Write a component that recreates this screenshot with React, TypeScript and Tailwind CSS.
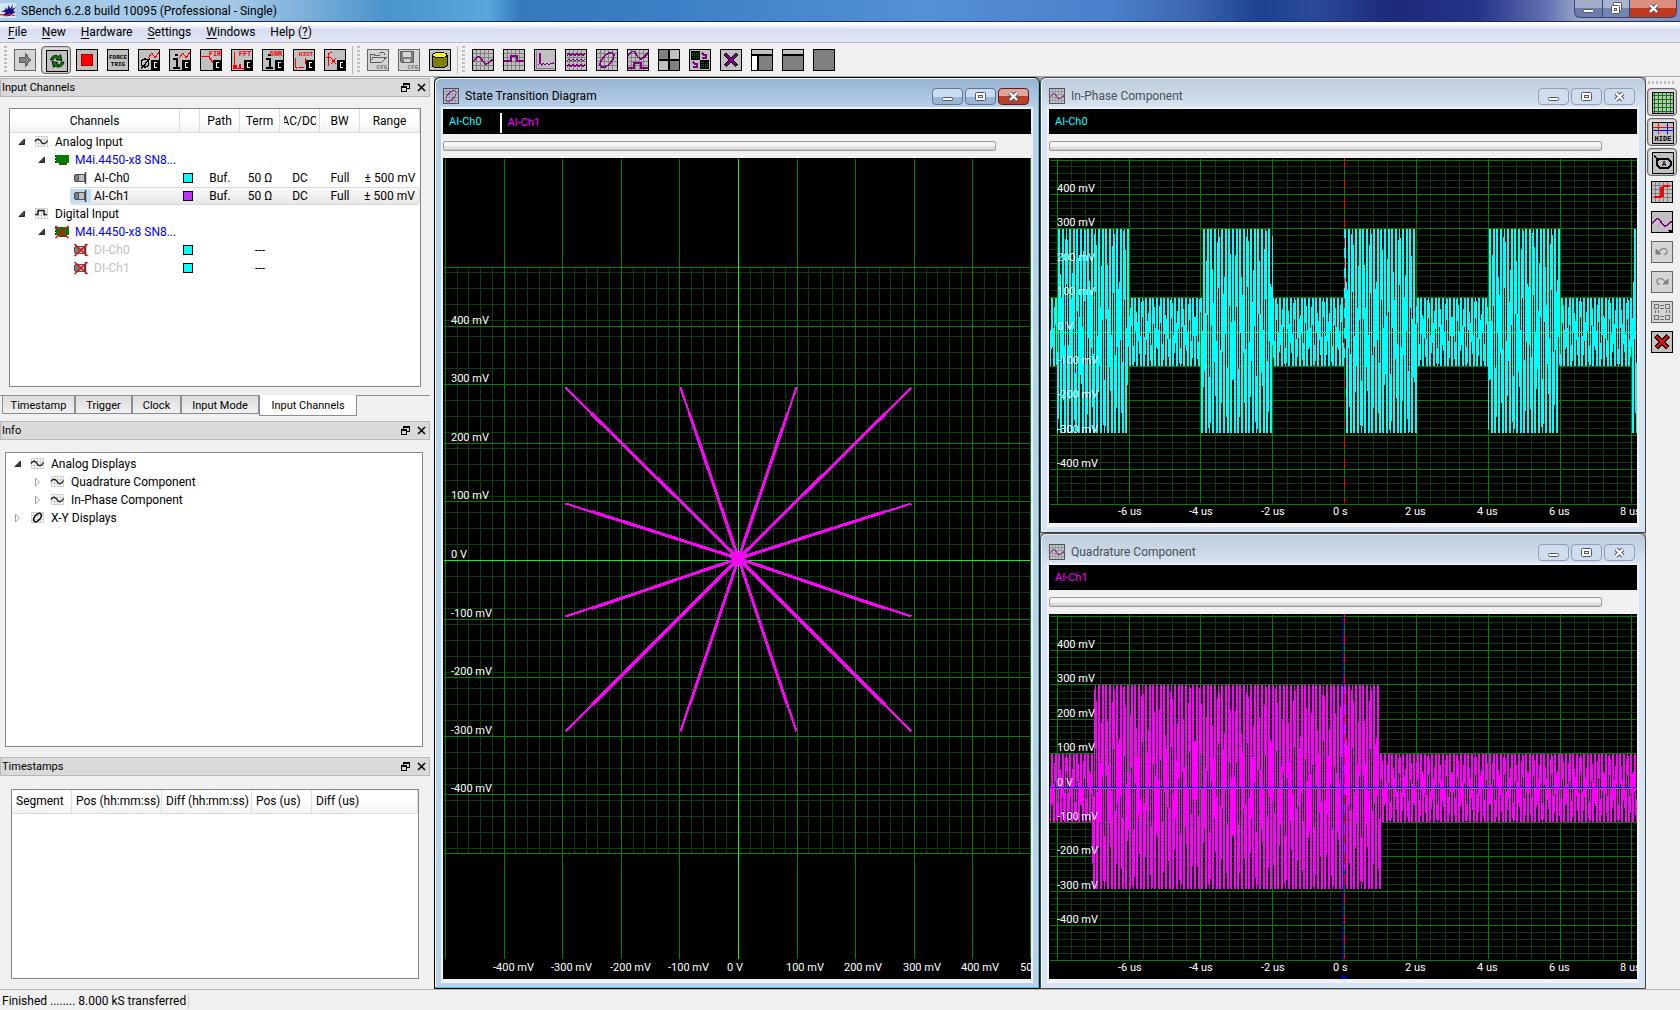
import { useLayoutEffect, useRef, useState } from 'react';
import type { ReactNode } from 'react';
import { clsx } from 'clsx';

/* ---------- icons ---------- */

function Icon({ children, off }: { children?: ReactNode; off?: boolean }) {
  return (
    <svg width="22" height="22" viewBox="0 0 22 22" shapeRendering="crispEdges" fill="none" aria-hidden="true" className="shrink-0">
      <rect x="0.5" y="0.5" width="21" height="21" fill={off ? '#d4d4d4' : '#c0c0c0'} stroke={off ? '#666' : '#000'} />
      {children}
    </svg>
  );
}

const Grid = ({ color = '#808080' }: { color?: string }) => (
  <path d="M4.5 1v20M8.5 1v20M12.5 1v20M16.5 1v20M1 4.5h20M1 8.5h20M1 12.5h20M1 16.5h20" stroke={color} />
);

const Tag = ({ x, y, color, size = 7, children }: { x: number; y: number; color: string; size?: number; children: string }) => (
  <text x={x} y={y} fill={color} fontSize={size} fontWeight="700" textAnchor="middle" fontFamily="'Liberation Mono', monospace">
    {children}
  </text>
);

/* little "C" box that marks the calculation tools */
const CalcBox = () => (
  <>
    <rect x="13" y="11" width="9" height="11" fill="#000" />
    <path d="M19 13.5h-2.5v5H19" stroke="#fff" strokeWidth="1.4" />
  </>
);

const WAVE = 'M1 12.5C4 11 5 7.5 7 7.5S11 15 14 15S18 11 21 10.5';

const icons = {
  start: (
    <Icon off>
      <path d="M5 8.5h6v-4l6 6.5l-6 6.5v-4H5z" fill="#808080" stroke="#606060" />
    </Icon>
  ),
  loop: (
    <Icon>
      <g stroke="#000" strokeWidth="0.8" fill="#008000" shapeRendering="auto">
        <path d="M4.500 10C5 6 9 4 13 6.500L14.500 4.500L16 10.500L10 9.800L11.500 8.200C9 7 7.500 8 7.500 10z" />
        <path d="M18 12C17.500 16 13 18.500 9 16L7.500 17.500L6 11.500L12 12.500L10.500 14C13 15.500 15 14 15 12z" />
      </g>
    </Icon>
  ),
  stop: (
    <Icon>
      <rect x="5.5" y="5.5" width="11" height="11" fill="#f00" stroke="#900" />
    </Icon>
  ),
  force: (
    <Icon>
      <Tag x={11} y={10} color="#000" size={6}>FORCE</Tag>
      <Tag x={11} y={17} color="#000" size={6}>TRIG</Tag>
    </Icon>
  ),
  average: (
    <Icon>
      <path d="M10 9l4-5l3 5l4-6" stroke="#f00" />
      <ellipse cx="7" cy="14" rx="3.500" ry="4" stroke="#000" strokeWidth="1.500" />
      <path d="M3 20L12 9" stroke="#000" strokeWidth="1.300" />
      <CalcBox />
    </Icon>
  ),
  signalInfo: (
    <Icon>
      <path d="M10 9l4-5l3 5l4-6" stroke="#f00" />
      <path d="M4 10h4v8M4 19h7M6 6h3" stroke="#000" strokeWidth="2" />
      <CalcBox />
    </Icon>
  ),
  fir: (
    <Icon>
      <path d="M1 7.500h8l8 13" stroke="#f00" strokeWidth="1.300" />
      <Tag x={15} y={7} color="#f00">FIR</Tag>
      <CalcBox />
    </Icon>
  ),
  fft: (
    <Icon>
      <path d="M2 20V16h1V3h1v13h2v3h2v-4h2v4h3v1z" fill="#f00" />
      <Tag x={14} y={7} color="#f00">FFT</Tag>
      <CalcBox />
    </Icon>
  ),
  snr: (
    <Icon>
      <path d="M4 10h4v8M4 19h7M6 6h3" stroke="#000" strokeWidth="2" />
      <Tag x={14} y={7} color="#f00">SNR</Tag>
      <CalcBox />
    </Icon>
  ),
  hist: (
    <Icon>
      <path d="M2.500 9v9l2 1.500M5 18.500h6M12.500 9v6" stroke="#f00" strokeWidth="1.500" />
      <Tag x={13} y={7} color="#f00" size={6}>HIST</Tag>
      <CalcBox />
    </Icon>
  ),
  formula: (
    <Icon>
      <path d="M8 3.500H6.500L4.500 5v12M2 8.500h5M7 9l5 6M12 9l-5 6" stroke="#f00" />
      <CalcBox />
    </Icon>
  ),
  openCfg: (
    <Icon off>
      <path d="M3 12V5h4l1 1.500h5M3 12.500l3-4h13l-4 4.500H3zM12 4.500c3-2 5-1 6 1" stroke="#606060" />
      <Tag x={15} y={20} color="#707070" size={6}>CFG</Tag>
    </Icon>
  ),
  saveCfg: (
    <Icon off>
      <path d="M2.500 2.500h13v11h-12l-1-1z" fill="#808080" stroke="#606060" />
      <path d="M5 3h8v5H5zM6 10h6v3H6z" fill="#d4d4d4" />
      <Tag x={15} y={20} color="#707070" size={6}>CFG</Tag>
    </Icon>
  ),
  database: (
    <Icon>
      <path d="M3.500 6v11c2 2.500 12 2.500 14.500 0V6z" fill="#808000" stroke="#000" />
      <ellipse cx="10.700" cy="6" rx="7.200" ry="2.500" fill="#ff0" stroke="#000" />
    </Icon>
  ),
  analog: (
    <Icon>
      <Grid />
      <path d={WAVE} stroke="#800080" strokeWidth="1.500" />
    </Icon>
  ),
  digital: (
    <Icon>
      <Grid />
      <path d="M1 12h7V7h6v5h7" stroke="#800080" strokeWidth="1.600" />
    </Icon>
  ),
  spectrum: (
    <Icon>
      <path d="M2.500 2v17.500H20" stroke="#808080" />
      <path d="M4 16l2-2V4v9l1.500 3l2-1.500l1.500 1.500l2-2l2 2l2-2l1 1l2-1.500" stroke="#800080" strokeWidth="1.300" />
    </Icon>
  ),
  multi: (
    <Icon>
      <Grid />
      <path d="M2 6.500l2-2l2 2l2-2l2 2l2-2l2 2l2-2l2 2l2-2M2 12l2-2l2 2l2-2l2 2l2-2l2 2l2-2l2 2l2-2M2 17.500l2-2l2 2l2-2l2 2l2-2l2 2l2-2l2 2l2-2" stroke="#800080" />
    </Icon>
  ),
  xy: (
    <Icon>
      <Grid />
      <ellipse cx="11" cy="11" rx="9" ry="4.500" transform="rotate(-48 11 11)" stroke="#800080" strokeWidth="1.600" />
    </Icon>
  ),
  mixed: (
    <Icon>
      <Grid />
      <path d="M1 7C4 2 7 1 9 5s5 7 8 3l4-4M1 19h6v-5h7v5h7" stroke="#800080" strokeWidth="1.500" />
    </Icon>
  ),
  tile: (
    <Icon>
      <path d="M1 1h10v10H1zM11 11h10v10H11z" fill="#808080" />
      <path d="M11 0v22M0 11h22" stroke="#000" strokeWidth="2" />
    </Icon>
  ),
  swap: (
    <Icon>
      <path d="M2 2h9v9H2zM11 11h9v9h-9z" fill="#000" />
      <path d="M3 4.500h7M3 6.500h7M3 8.500h7M12 13.500h7M12 15.500h7M12 17.500h7" stroke="#008000" strokeDasharray="1 1" />
      <path d="M13 4l3 3M17 5v4h-4M4 13l3 3M8 14v4H4" stroke="#800080" strokeWidth="1.500" />
    </Icon>
  ),
  closeDisplay: (
    <Icon>
      <path d="M5 5l12 12M17 5L5 17" stroke="#000" strokeWidth="4" />
      <path d="M5.500 5.500l11 11M16.500 5.500l-11 11" stroke="#800080" strokeWidth="2.200" />
    </Icon>
  ),
  layoutSplit: (
    <Icon>
      <path d="M1 7h6v14H1z" fill="#fff" />
      <path d="M8 7h13v14H8z" fill="#808080" />
      <path d="M0 6h22M7 6v16" stroke="#000" strokeWidth="2" />
    </Icon>
  ),
  layoutTop: (
    <Icon>
      <path d="M1 7h20v14H1z" fill="#808080" />
      <path d="M0 6h22" stroke="#000" strokeWidth="2" />
    </Icon>
  ),
  layoutFull: (
    <Icon>
      <path d="M1 1h20v20H1z" fill="#808080" />
    </Icon>
  ),
  grid: (
    <Icon>
      <path d="M2.500 1v20M6.500 1v20M10.500 1v20M14.500 1v20M18.500 1v20M1 3.500h20M1 7.500h20M1 11.500h20M1 15.500h20M1 19.500h20" stroke="#008000" />
    </Icon>
  ),
  hide: (
    <Icon>
      <path d="M1 5.500h20M6.500 1v11" stroke="#f00" />
      <path d="M1 8.500h20M15.500 1v11" stroke="#00f" />
      <Tag x={11} y={19} color="#000" size={7}>HIDE</Tag>
    </Icon>
  ),
  label: (
    <Icon>
      <path d="M2 4l5 4M6 7h10l3 3v3l-3 3H8l-3-3V8z" stroke="#000" strokeWidth="1.600" />
      <Tag x={12} y={14} color="#000" size={7}>A</Tag>
    </Icon>
  ),
  edge: (
    <Icon>
      <Grid />
      <path d="M3 16h6c2 0 2-2 2-5s0-6 2-6h6" stroke="#f00" strokeWidth="2" />
      <path d="M11 16V6" stroke="#f00" strokeWidth="4" />
    </Icon>
  ),
  wave: (
    <Icon>
      <path d={WAVE} stroke="#800080" strokeWidth="1.500" />
      <path d="M17 19h5l-2.500 3z" fill="#000" />
    </Icon>
  ),
  undo: (
    <Icon off>
      <g shapeRendering="auto">
        <path d="M5 8v5h5z" fill="#808080" stroke="#808080" />
        <path d="M8 10.500c2.500-4 8-4 8 0c0 2-1 3-3 3" stroke="#808080" strokeWidth="1.200" />
      </g>
    </Icon>
  ),
  redo: (
    <Icon off>
      <g shapeRendering="auto">
        <path d="M17 8v5h-5z" fill="#808080" stroke="#808080" />
        <path d="M14 10.500c-2.500-4-8-4-8 0c0 2 1 3 3 3" stroke="#808080" strokeWidth="1.200" />
      </g>
    </Icon>
  ),
  channels: (
    <Icon off>
      <path d="M3.500 3.500h4v4h-4zM14.500 3.500h4v4h-4zM3.500 14.500h4v4h-4zM14.500 14.500h4v4h-4zM9 4.500h4M9 7.500h4M9 15.500h4M9 18.500h4M4.500 9v3M7.500 9v3M15.500 9v3M18.500 9v3" stroke="#707070" />
    </Icon>
  ),
  remove: (
    <Icon>
      <path d="M5 5l12 12M17 5L5 17" stroke="#000" strokeWidth="4.500" />
      <path d="M5.500 5.500l11 11M16.500 5.500l-11 11" stroke="#f00" strokeWidth="2.600" />
    </Icon>
  ),
};

type IconName = keyof typeof icons;

function TreeIcon({ kind }: { kind: string }) {
  const crossed = kind.endsWith('-off');
  const base = kind.replace('-off', '');
  return (
    <svg width="16" height="14" viewBox="0 0 16 14" fill="none" aria-hidden="true" className="shrink-0">
      {(base === 'analog' || base === 'digital' || base === 'xy') && (
        <path d="M1.500 1.500h12v10h-12zM4.500 1v11M7.500 1v11M10.500 1v11M1 4.500h13M1 8.500h13" stroke="#d0d0d0" shapeRendering="crispEdges" />
      )}
      {base === 'analog' && <path d="M1 6.500C2.500 4 5 3 7 6.500S11.500 9 13.500 5.500" stroke="#222" strokeWidth="1.500" />}
      {base === 'digital' && <path d="M1 7.500h3v-4h6v4h3" stroke="#222" strokeWidth="1.500" />}
      {base === 'xy' && <ellipse cx="7.500" cy="6.500" rx="5" ry="2.800" transform="rotate(-50 7.500 6.500)" stroke="#111" strokeWidth="1.700" />}
      {base === 'card' && (
        <>
          <path d="M2 2h13v8H2z" fill="#008000" />
          <path d="M5 10h8v2H5z" fill="#604000" />
          <path d="M1.500 2v2M1.500 5v2M1.500 8v2" stroke="#222" />
        </>
      )}
      {base === 'plug' && (
        <>
          <rect x="1.500" y="3.500" width="4" height="7" rx="1.500" fill="#808080" stroke="#444" />
          <rect x="5.500" y="3.500" width="6" height="7" fill="#c0c0c0" stroke="#555" />
          <path d="M12.500 1v12" stroke="#444" strokeWidth="1.500" />
        </>
      )}
      {crossed && <path d="M1.500 1l13 12M14.500 1l-13 12" stroke="#e01010" strokeWidth="1.700" />}
    </svg>
  );
}

function Arrow({ open }: { open: boolean }) {
  return (
    <svg width="8" height="10" viewBox="0 0 8 10" aria-hidden="true" className="shrink-0">
      {open ? <path d="M6.500 2v5.500H1z" fill="#404040" stroke="#262626" /> : <path d="M1.500 1l4 4l-4 4z" fill="#fff" stroke="#a0a0a0" />}
    </svg>
  );
}

/* ---------- window controls ---------- */

function Glyph({ kind }: { kind: 'min' | 'max' | 'restore' | 'close' }) {
  return (
    <svg width="15" height="13" viewBox="0 0 15 13" fill="none" aria-hidden="true">
      {kind === 'min' && <rect x="2.500" y="7.500" width="10" height="3" rx="1" fill="#fff" stroke="#535666" />}
      {kind === 'max' && (
        <>
          <rect x="2.500" y="2.500" width="10" height="8" rx="1" fill="#fff" stroke="#535666" />
          <rect x="5.500" y="5.500" width="4" height="2" stroke="#535666" />
        </>
      )}
      {kind === 'restore' && (
        <>
          <rect x="4.500" y="0.500" width="8" height="8" rx="1" fill="#fff" stroke="#535666" />
          <rect x="2.500" y="3.500" width="8" height="8" rx="1" fill="#fff" stroke="#535666" />
          <rect x="5.500" y="6.500" width="2" height="2" stroke="#535666" />
        </>
      )}
      {kind === 'close' && (
        <>
          <path d="M4 3l7 7M11 3l-7 7" stroke="#535666" strokeWidth="4.500" />
          <path d="M4 3l7 7M11 3l-7 7" stroke="#fff" strokeWidth="2.400" />
        </>
      )}
    </svg>
  );
}

function DockTitle({ children }: { children: string }) {
  return (
    <div className="mr-1 flex h-[19px] shrink-0 items-center border border-[#b8b8b8] bg-[#dadada] pl-px text-[11px]">
      <h2 className="flex-1 pt-0.5">{children}</h2>
      <button aria-label={`Float ${children}`} className="w-4">
        <svg width="9" height="9" viewBox="0 0 9 9" fill="none" stroke="#000" shapeRendering="crispEdges">
          <path d="M2.500 3V.500h6v5H6M2 1h7M.500 3.500h5v5h-5zM0 4h6" />
        </svg>
      </button>
      <button aria-label={`Close ${children}`} className="w-3">
        <svg width="9" height="9" viewBox="0 0 9 9" fill="none" stroke="#000" strokeWidth="1.500">
          <path d="M1 1l7 7M8 1L1 8" />
        </svg>
      </button>
    </div>
  );
}

/* ---------- left docks ---------- */

type ChannelRow = {
  level: number;
  icon: string;
  name: string;
  color?: string;
  cells?: string[];
  selected?: boolean;
};

const channelRows: ChannelRow[] = [
  { level: 0, icon: 'analog', name: 'Analog Input' },
  { level: 1, icon: 'card', name: 'M4i.4450-x8 SN8...' },
  { level: 2, icon: 'plug', name: 'AI-Ch0', color: '#00ffff', cells: ['Buf.', '50 Ω', 'DC', 'Full', '± 500 mV'] },
  { level: 2, icon: 'plug', name: 'AI-Ch1', color: '#c030ff', cells: ['Buf.', '50 Ω', 'DC', 'Full', '± 500 mV'], selected: true },
  { level: 0, icon: 'digital', name: 'Digital Input' },
  { level: 1, icon: 'card-off', name: 'M4i.4450-x8 SN8...' },
  { level: 2, icon: 'plug-off', name: 'DI-Ch0', color: '#00ffff', cells: ['', '---', '', '', ''] },
  { level: 2, icon: 'plug-off', name: 'DI-Ch1', color: '#00ffff', cells: ['', '---', '', '', ''] },
];

const levelPad = ['pl-2', 'pl-7', 'pl-[61px]'];

function ChannelTable() {
  const head = 'h-6 border-b border-r border-[#dcdcdc] bg-linear-to-b from-white from-50% to-[#f1f2f4] p-0 font-normal';
  return (
    <div className="ml-[9px] mr-[13px] mt-[11px] flex-[280] overflow-hidden border border-[#828790] bg-white">
      <table className="w-full table-fixed border-separate border-spacing-0 text-center text-xs leading-4">
        <thead>
          <tr>
            <th className={clsx(head, 'w-[170px]')}>Channels</th>
            <th className={clsx(head, 'w-5')} aria-label="Colour" />
            <th className={clsx(head, 'w-10')}>Path</th>
            <th className={clsx(head, 'w-10')}>Term</th>
            <th className={clsx(head, 'w-10')}>
              <span className="mx-auto flex w-8 justify-center overflow-hidden">AC/DC</span>
            </th>
            <th className={clsx(head, 'w-10')}>BW</th>
            <th className={head}>Range</th>
          </tr>
        </thead>
        <tbody>
          {channelRows.map((row, i) => {
            const mark = row.selected && 'border-y border-[#d9d9d9] bg-linear-to-b from-[#fafafa] to-[#e6e6e6]';
            return (
              <tr key={i}>
                <td className={clsx('h-[18px] p-0', levelPad[row.level])}>
                  <div className={clsx('flex items-center', mark, row.selected && '-ml-px h-[18px] rounded-l border-l')}>
                    {row.level < 2 && (
                      <button aria-label={`Collapse ${row.name}`} className="mr-1.5 flex w-2">
                        <Arrow open />
                      </button>
                    )}
                    <span className={clsx('mr-[3px] px-0.5', row.selected && 'bg-[#bcdcf8]')}>
                      <TreeIcon kind={row.icon} />
                    </span>
                    <span className={clsx('whitespace-nowrap', row.level === 1 && 'text-[#0000ff]', row.name.startsWith('DI-') && 'text-[#c0c0c0]')}>
                      {row.name}
                    </span>
                  </div>
                </td>
                <td className={clsx('p-0', mark)}>
                  {row.color && <span className="ml-[3px] block size-2.5 border border-black" style={{ backgroundColor: row.color }} />}
                </td>
                {(row.cells ?? ['', '', '', '', '']).map((cell, j) => (
                  <td key={j} className={clsx('whitespace-nowrap p-0', mark, row.selected && j === 4 && 'rounded-r border-r')}>
                    {cell}
                  </td>
                ))}
              </tr>
            );
          })}
        </tbody>
      </table>
    </div>
  );
}

const dockTabs = [
  { label: 'Timestamp', width: 'w-[73px]' },
  { label: 'Trigger', width: 'w-[57px]' },
  { label: 'Clock', width: 'w-[49px]' },
  { label: 'Input Mode', width: 'w-[78px]' },
  { label: 'Input Channels', width: 'w-[98px]' },
];

function DockTabs() {
  const [active, setActive] = useState('Input Channels');
  return (
    <div role="tablist" className="mb-[5px] mr-1 mt-2 flex h-[21px] shrink-0 items-start border-t border-[#8f8f8f] pl-0.5 text-[11px]">
      {dockTabs.map((tab) => (
        <button
          key={tab.label}
          role="tab"
          aria-selected={active === tab.label}
          onClick={() => setActive(tab.label)}
          className={clsx(
            'whitespace-nowrap border border-t-0 border-[#898c95]',
            tab.width,
            active === tab.label ? '-mt-px h-[21px] bg-white pt-0.5' : 'h-[18px] bg-linear-to-b from-[#dcdcdc] to-[#f0f0f0] pt-0.5'
          )}
        >
          {tab.label}
        </button>
      ))}
    </div>
  );
}

const displays = [
  { level: 0, open: true, icon: 'analog', name: 'Analog Displays' },
  { level: 1, open: false, icon: 'analog', name: 'Quadrature Component' },
  { level: 1, open: false, icon: 'analog', name: 'In-Phase Component' },
  { level: 0, open: false, icon: 'xy', name: 'X-Y Displays' },
];

function InfoTree() {
  return (
    <ul className="ml-[5px] mr-[11px] mt-3 flex-[294] overflow-hidden border border-[#828790] bg-white pt-0.5 text-xs leading-4">
      {displays.map((item) => (
        <li key={item.name} className={clsx('flex h-[18px] items-center', item.level ? 'pl-7' : 'pl-2')}>
          <button aria-label={`Toggle ${item.name}`} className="mr-[7px] w-2">
            <Arrow open={item.open} />
          </button>
          <span className="mr-1 px-px">
            <TreeIcon kind={item.icon} />
          </span>
          {item.name}
        </li>
      ))}
    </ul>
  );
}

function TimestampTable() {
  const head = 'h-6 border-b border-r border-[#dcdcdc] bg-linear-to-b from-white from-50% to-[#f1f2f4] p-0 pl-1 font-normal whitespace-nowrap';
  return (
    <div className="mb-[10px] ml-[11px] mr-[15px] mt-[13px] flex-[190] overflow-hidden border border-[#828790] bg-white">
      <table className="w-full table-fixed border-separate border-spacing-0 text-left text-xs leading-4">
        <thead>
          <tr>
            <th className={clsx(head, 'w-[60px]')}>Segment</th>
            <th className={clsx(head, 'w-[90px]')}>Pos (hh:mm:ss)</th>
            <th className={clsx(head, 'w-[90px]')}>Diff (hh:mm:ss)</th>
            <th className={clsx(head, 'w-[60px]')}>Pos (us)</th>
            <th className={head}>Diff (us)</th>
          </tr>
        </thead>
      </table>
    </div>
  );
}

/* ---------- plots ---------- */

const MAJOR = '#008000';
const MINOR = '#0f3c0f';
const snap = (v: number) => Math.round(v) + 0.5;

function useSize() {
  const ref = useRef<HTMLDivElement>(null);
  const [size, setSize] = useState({ w: 0, h: 0 });
  useLayoutEffect(() => {
    const el = ref.current;
    if (!el) return;
    const measure = () => setSize({ w: el.clientWidth, h: el.clientHeight });
    measure();
    const observer = new ResizeObserver(measure);
    observer.observe(el);
    return () => observer.disconnect();
  }, []);
  return { ref, ...size };
}

const range = (from: number, to: number, step = 1) => {
  const out: number[] = [];
  for (let v = from; v <= to; v += step) out.push(v);
  return out;
};

const milliVolts = (v: number) => (v === 0 ? '0 V' : `${v} mV`);

function PlotBox({ label, draw }: { label: string; draw: (w: number, h: number) => ReactNode }) {
  const { ref, w, h } = useSize();
  return (
    <div ref={ref} className="min-h-0 flex-1 overflow-hidden bg-black">
      {w > 0 && (
        <svg width={w} height={h} role="img" aria-label={label} className="block text-[11px]" fill="none" shapeRendering="crispEdges">
          {draw(w, h)}
        </svg>
      )}
    </div>
  );
}

const starEnds = [
  [-295, 295], [-99, 295], [99, 295], [295, 295],
  [-295, 98], [295, 98], [-295, -96], [295, -96],
  [-295, -291], [-99, -291], [99, -291], [295, -291],
];

function drawStar(w: number, h: number) {
  const bottom = h - 20;
  const cx = w / 2 + 1;
  const cy = (bottom + 1) / 2 + 1;
  const unit = (w - 2) / 1000;
  const px = (v: number) => snap(cx + v * unit);
  const py = (v: number) => snap(cy - v * unit);
  const ticks = range(-500, 500, 100);
  let minor = '';
  ticks.slice(0, -1).forEach((v) => {
    [20, 40, 60, 80].forEach((d) => (minor += `M${px(v + d)} ${py(500) - 1}V${py(-500)}`));
  });
  range(-18, 18).forEach((k) => (minor += `M1 ${py(0) + k * 16}H${w}`));
  const major = ticks.map((v) => `M${Math.min(px(v), w - 0.5)} 1V${bottom}M1 ${py(v)}H${w}`).join('');
  return (
    <>
      <path d={minor} stroke={MINOR} />
      <path d={major} stroke={MAJOR} />
      <path d={`M${px(0)} 1V${bottom}M1 ${py(0)}H${w}`} stroke="#00ff00" />
      {starEnds.map(([x, y]) => (
        <g key={`${x}/${y}`} stroke="#ff00ff">
          <path d={`M${px(0)} ${py(3)}L${px(x)} ${py(y)}`} strokeWidth="2" />
          <path d={`M${px(0)} ${py(3)}L${px(x * 0.85)} ${py(y * 0.85)}`} strokeWidth="3" />
        </g>
      ))}
      <circle cx={px(0)} cy={py(3)} r="6" fill="#ff00ff" />
      <g fill="#fff" shapeRendering="auto">
        {range(-400, 400, 100).map((v) => (
          <text key={`y${v}`} x="8" y={Math.round(py(v) - 3)}>{milliVolts(v)}</text>
        ))}
        {range(-400, 500, 100).map((v) => (
          <text key={`x${v}`} x={Math.round(px(v) - 12)} y={h - 8}>{milliVolts(v)}</text>
        ))}
      </g>
    </>
  );
}

function drawWave(w: number, h: number, color: string, amplitude: (us: number) => number, cursor: boolean) {
  const bottom = h - 20;
  const px = (us: number) => snap(1 + ((us + 8.2) / 16.37) * w - 0.5);
  const py = (mv: number) => snap(1.5 + ((500 - mv) / 1000) * (bottom - 1));
  let minor = '';
  for (let k = -20; k <= 20; k++) minor += `M${px(k * 0.4)} 1V${bottom}`;
  range(-500, 500, 20).forEach((v) => (minor += `M1 ${py(v)}H${w}`));
  const major =
    range(-8, 8, 2).map((v) => `M${px(v)} 1V${bottom}`).join('') + range(-500, 500, 100).map((v) => `M1 ${py(v)}H${w}`).join('');

  // 10 MHz carrier, drawn as one min/max bar for each pixel column
  const level = (x: number) => {
    const us = ((x - 1) / w) * 16.37 - 8.2;
    return Math.max(-0.97, Math.min(1, 1.1 * Math.sin(us * 62.35 + 0.4))) * amplitude(us);
  };
  let wave = '';
  for (let x = 1; x < w; x++) {
    const samples = [-0.15, 0.15, 0.5, 0.85, 1.15].map((d) => level(x + d));
    wave += `M${x + 0.5} ${py(Math.max(...samples))}V${py(Math.min(...samples))}`;
  }

  return (
    <>
      <path d={minor} stroke={MINOR} />
      <path d={major} stroke={MAJOR} />
      <path d={`M1 ${py(0)}H${w}`} stroke="#00ff00" />
      <path d={wave} stroke={color} />
      {cursor && (
        <>
          <path d={`M${px(0) - 1} 0V${h - 19}M0 ${py(0) - 1}H${w}`} stroke="#0000ff" />
          <path d={`M${px(0) - 4} ${h}l3-4l4 4z`} fill="#0000ff" />
        </>
      )}
      <path d={`M${px(0)} 0V${bottom}`} stroke="#ff0000" strokeDasharray="10 10" />
      <g fill="#fff" shapeRendering="auto">
        {range(-400, 400, 100).map((v) => (
          <text key={`y${v}`} x="8" y={Math.round(py(v) - 3)}>{milliVolts(v)}</text>
        ))}
        {range(-6, 8, 2).map((v) => (
          <text key={`x${v}`} x={Math.round(px(v) - 12)} y={h - 8}>{v === 0 ? '0 s' : `${v} us`}</text>
        ))}
      </g>
    </>
  );
}

const inPhase = (us: number) => (((Math.floor(us / 2) % 2) + 2) % 2 === 0 ? 300 : 100);
const quadrature = (us: number) => (us > -7 && us < 1 ? 300 : 100);

type DisplayProps = {
  title: string;
  icon: IconName;
  active?: boolean;
  channels: { name: string; className: string }[];
  draw: (w: number, h: number) => ReactNode;
};

function DisplayWindow({ title, icon, active, channels, draw }: DisplayProps) {
  const button = clsx(
    'flex h-[17px] w-[31px] items-center justify-center rounded-sm border',
    active ? 'border-[#5f7690] bg-linear-to-b from-[#c9dcf0] from-50% to-[#9ab7d6] to-50%' : 'border-[#8f9db8] bg-[#cfdceb]'
  );
  return (
    <section
      className={clsx(
        'flex min-h-0 min-w-0 flex-col rounded-t-md border px-[6px] pb-[5px]',
        active
          ? 'border-black bg-[#b9d1ea] bg-linear-to-b from-[#97b2d0] to-[#b9d1ea] to-[30px] shadow-[inset_-1px_-1px_0_#28d0f0,inset_1px_1px_0_#fff]'
          : 'border-[#444] bg-[#d7e4f2] bg-linear-to-b from-[#bccad9] to-[#d7e4f2] to-[30px] shadow-[inset_1px_1px_0_#eef4fa]'
      )}
    >
      <header className="flex h-[29px] shrink-0 items-center gap-0.5 pl-0.5 pr-1 pt-[7px]">
        <span className="mr-1 flex size-4 opacity-80 *:size-4">{icons[icon]}</span>
        <h2 className={clsx('flex-1 truncate text-xs', active ? 'text-black' : 'text-[#4a4f58]')}>{title}</h2>
        <button aria-label={`Minimize ${title}`} className={button}><Glyph kind="min" /></button>
        <button aria-label={`Maximize ${title}`} className={button}><Glyph kind="max" /></button>
        <button
          aria-label={`Close ${title}`}
          className={clsx(
            'flex h-[17px] w-[31px] items-center justify-center rounded-sm border',
            active ? 'border-[#5a1a20] bg-linear-to-b from-[#e0a598] from-45% to-[#b8402c] to-50%' : 'border-[#8f9db8] bg-[#cfdceb]'
          )}
        >
          <Glyph kind="close" />
        </button>
      </header>
      <div className="flex min-h-0 flex-1 flex-col border-2 border-b-4 border-[#f2f2f2] bg-[#f0f0f0]">
        <div className="flex h-[25px] shrink-0 items-center bg-black pl-1.5 pt-0.5 text-[11px]">
          {channels.map((channel, i) => (
            <span key={channel.name} className={clsx(channel.className, i > 0 && 'ml-[18px] border-l-2 border-white pl-1.5 leading-5')}>
              {channel.name}
            </span>
          ))}
        </div>
        <input
          type="range"
          aria-label={`Scroll ${title}`}
          className="mb-[7px] mr-[35px] mt-[7px] h-[10px] shrink-0 appearance-none rounded-xs border border-[#9a9a9a] bg-linear-to-b from-[#f6f6f6] from-40% to-[#cacaca] [&::-webkit-slider-thumb]:appearance-none"
        />
        <PlotBox label={title} draw={draw} />
      </div>
    </section>
  );
}

/* ---------- bars ---------- */

function ToolButton({ name, pressed }: { name: IconName; pressed?: boolean }) {
  return (
    <button
      aria-label={name}
      aria-pressed={pressed}
      className={clsx(
        'flex h-7 w-[30px] items-center justify-center rounded',
        pressed && 'border border-[#6a6a6a] bg-[#e2e2e2] pl-px pt-px shadow-[inset_0_0_2px_#777]'
      )}
    >
      {icons[name]}
    </button>
  );
}

const Handle = () => <span className="ml-1 mr-0.5 h-7 w-[3px] bg-[repeating-linear-gradient(to_bottom,#bdbdbd_0_2px,transparent_2px_4px)]" />;

const toolGroups: IconName[][] = [
  ['start', 'loop', 'stop', 'force', 'average', 'signalInfo', 'fir', 'fft', 'snr', 'hist', 'formula'],
  ['openCfg', 'saveCfg', 'database'],
  ['analog', 'digital', 'spectrum', 'multi', 'xy', 'mixed', 'tile', 'swap', 'closeDisplay', 'layoutSplit', 'layoutTop', 'layoutFull'],
];

const sideTools: IconName[] = ['grid', 'hide', 'label', 'edge', 'wave', 'undo', 'redo', 'channels', 'remove'];

const menus = [
  ['', 'F', 'ile'],
  ['', 'N', 'ew'],
  ['', 'H', 'ardware'],
  ['', 'S', 'ettings'],
  ['', 'W', 'indows'],
  ['Help (', '?', ')'],
];

function TitleBar() {
  const button = 'flex h-[18px] items-center justify-center border border-t-0 border-[#3a4468]';
  return (
    <header className="flex h-[22px] shrink-0 items-start border-b border-[#1c2c50] bg-[linear-gradient(90deg,#a8cbe8_0%,#a3c8e6_14%,#7db0da_18%,#4a93cc_23%,#5ba6dd_29%,#3379bb_31%,#3b80c6_40%,#5590d6_55%,#4a80cc_66%,#3c66b0_71%,#1e4090_75%,#2a4a9c_78%,#1c2a78_83%,#24348a_88%,#6070b0_92%,#9aa6cc_94%,#8090c0_100%)] text-xs">
      <svg width="16" height="16" viewBox="0 0 16 16" className="mt-[3px]" aria-hidden="true">
        <rect width="16" height="15" fill="#fff" opacity="0.500" />
        <path d="M1 9L5 7L6 4l1 3L9 2l1 4L13 1l-1 5L16 4l-3 4l3 1l-4 2l-2 2H5L3 12L6 9z" fill="#101080" />
        <path d="M0 12c4-2 5 3 8 0s4 2 7 0" stroke="#e02020" strokeWidth="1.200" fill="none" />
      </svg>
      <h1 className="ml-[5px] flex-1 leading-[22px]">SBench 6.2.8 build 10095 (Professional - Single)</h1>
      <div className="mr-[3px] flex">
        <button aria-label="Minimize" className={clsx(button, 'w-[29px] rounded-bl-md bg-linear-to-b from-[#a4aecb] from-45% to-[#6c7cab] to-50%')}><Glyph kind="min" /></button>
        <button aria-label="Restore" className={clsx(button, 'w-[27px] border-l-0 bg-linear-to-b from-[#a9b3cf] from-45% to-[#7585b2] to-50%')}><Glyph kind="restore" /></button>
        <button aria-label="Close" className={clsx(button, 'w-[47px] rounded-br-md border-l-0 bg-linear-to-b from-[#dc8f80] from-45% to-[#c03a20] to-50%')}><Glyph kind="close" /></button>
      </div>
    </header>
  );
}

export default function App() {
  return (
    <div className="flex h-screen flex-col overflow-hidden bg-[#f0f0f0] font-['Roboto','Open_Sans',sans-serif] text-black">
      <TitleBar />
      <nav className="flex h-[21px] shrink-0 items-center gap-[15px] border-b border-[#b8bcd0] bg-linear-to-b from-white from-10% via-[#d6dcee] via-40% to-[#e3e8f6] pl-2 text-xs">
        {menus.map(([before, key, after]) => (
          <button key={before + key}>
            {before}
            <span className="underline underline-offset-2">{key}</span>
            {after}
          </button>
        ))}
      </nav>
      <div role="toolbar" className="flex h-[34px] shrink-0 items-center border-b border-[#a8a8a8] pt-px">
        {toolGroups.map((group, i) => (
          <div key={i} className={clsx('flex items-center gap-px', i < 2 && 'border-r border-[#b4b4b4] pr-0.5')}>
            <Handle />
            {group.map((name) => (
              <ToolButton key={name} name={name} pressed={name === 'loop'} />
            ))}
          </div>
        ))}
      </div>

      <div className="flex min-h-0 flex-1 border-b border-[#b4b4b4]">
        <aside className="flex w-[434px] shrink-0 flex-col pt-px">
          <DockTitle>Input Channels</DockTitle>
          <ChannelTable />
          <DockTabs />
          <DockTitle>Info</DockTitle>
          <InfoTree />
          <div className="h-[10px] shrink-0" />
          <DockTitle>Timestamps</DockTitle>
          <TimestampTable />
        </aside>

        <main className="grid min-w-0 flex-1 grid-cols-2 bg-[#a0a0a0]">
          <DisplayWindow
            active
            title="State Transition Diagram"
            icon="xy"
            channels={[
              { name: 'AI-Ch0', className: 'text-[#00ffff]' },
              { name: 'AI-Ch1', className: 'text-[#ff00ff]' },
            ]}
            draw={drawStar}
          />
          <div className="grid min-h-0 min-w-0 grid-rows-2">
            <DisplayWindow
              title="In-Phase Component"
              icon="analog"
              channels={[{ name: 'AI-Ch0', className: 'text-[#00ffff]' }]}
              draw={(w, h) => drawWave(w, h, '#00ffff', inPhase, false)}
            />
            <DisplayWindow
              title="Quadrature Component"
              icon="analog"
              channels={[{ name: 'AI-Ch1', className: 'text-[#ff00ff]' }]}
              draw={(w, h) => drawWave(w, h, '#ff00ff', quadrature, true)}
            />
          </div>
        </main>

        <div role="toolbar" aria-orientation="vertical" className="flex w-[34px] shrink-0 flex-col items-center gap-0.5 pr-0.5">
          <span className="mb-0.5 mt-1 h-[3px] w-7 bg-[repeating-linear-gradient(to_right,#bdbdbd_0_2px,transparent_2px_4px)]" />
          {sideTools.map((name, i) => (
            <ToolButton key={name} name={name} pressed={i < 3} />
          ))}
        </div>
      </div>

      <footer className="flex h-5 shrink-0 items-center pl-0.5 pt-0.5 text-xs">
        <span className="border-r border-[#d4d4d4] pr-0.5">Finished ........ 8.000 kS transferred</span>
      </footer>
    </div>
  );
}
